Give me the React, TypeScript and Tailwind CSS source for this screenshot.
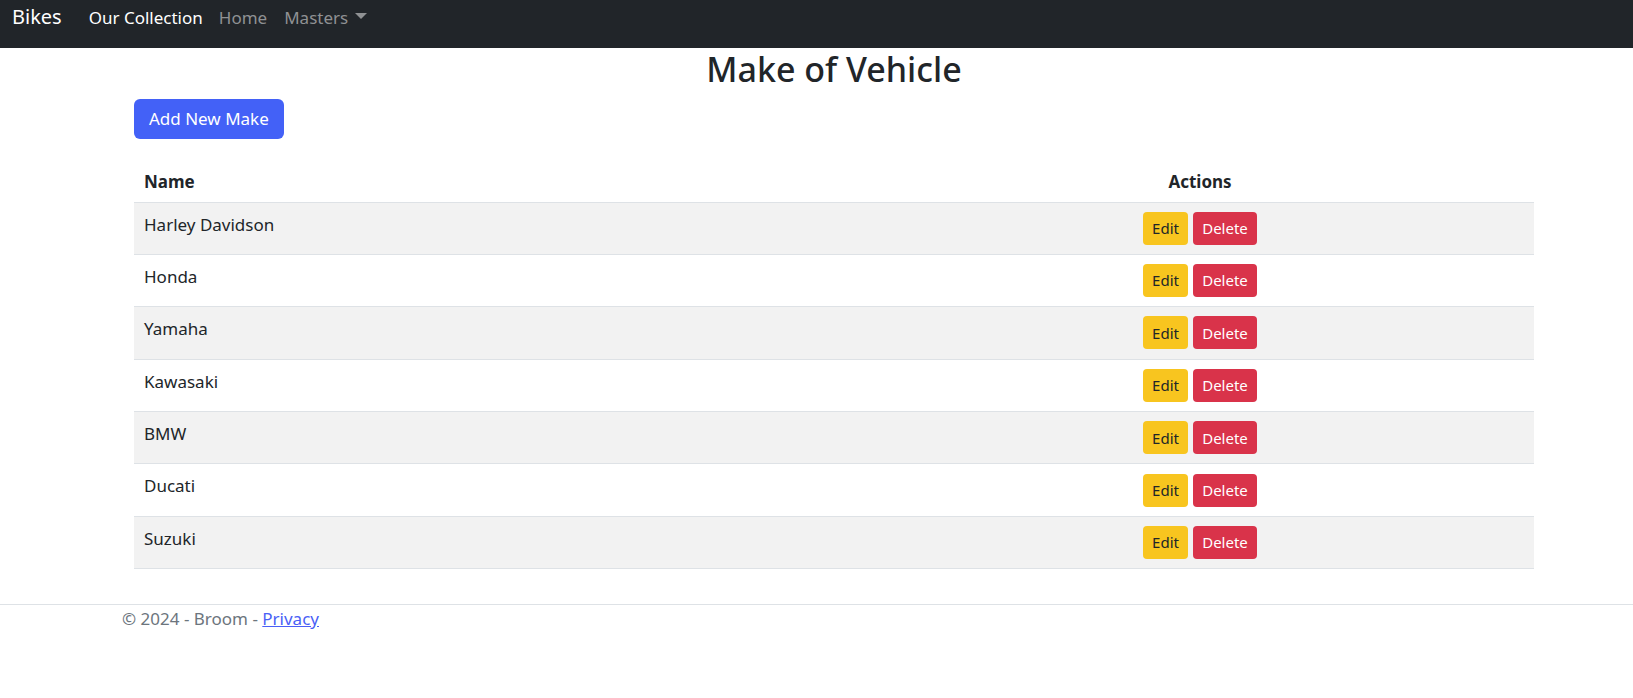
const makes = ["Harley Davidson", "Honda", "Yamaha", "Kawasaki", "BMW", "Ducati", "Suzuki"];

export default function App() {
  return (
    <div className="min-h-screen bg-white text-[#212529] font-['Noto_Sans',sans-serif]">
      <nav className="h-[48px] bg-[#212529] flex items-baseline pt-[2px] pl-[12px]">
        <span className="text-[20px] leading-[30px] text-white mr-[27px]">Bikes</span>
        <a className="text-[17px] leading-[24px] text-white mr-[16px]">Our Collection</a>
        <a className="text-[17px] leading-[24px] text-[#8f9193] mr-[17px]">Home</a>
        <a className="text-[17px] leading-[24px] text-[#8f9193] flex items-center">
          Masters
          <span className="ml-[7px] mb-[4px] w-0 h-0 border-l-[6px] border-r-[6px] border-t-[6px] border-l-transparent border-r-transparent border-t-[#8f9193]" />
        </a>
      </nav>

      <main className="ml-[134px] w-[1400px]">
        <h1 className="text-center text-[34px] leading-[43px] font-medium mt-[0px]">Make of Vehicle</h1>
        <button className="mt-[8px] h-[40px] px-[15px] rounded-[6px] bg-[#4361f7] text-white text-[17px]">
          Add New Make
        </button>

        <table className="w-full mt-[17px] text-[17px] border-collapse">
          <thead>
            <tr className="border-b border-[#dee2e6] h-[46px]">
              <th className="w-[732px] text-left font-bold px-[10px] pt-[6px] align-middle">Name</th>
              <th className="text-center font-bold pt-[6px] align-middle">Actions</th>
            </tr>
          </thead>
          <tbody>
            {makes.map((m, i) => (
              <tr key={m} className={`h-[52.4px] border-b border-[#dee2e6] ${i % 2 === 0 ? "bg-[#f2f2f2]" : "bg-white"}`}>
                <td className="px-[10px] align-top pt-[9px]">{m}</td>
                <td className="text-center">
                  <div className="flex justify-center gap-[5px]">
                    <button className="h-[33px] w-[45px] rounded-[4px] bg-[#f8c51f] text-[#212529] text-[15px]">Edit</button>
                    <button className="h-[33px] w-[64px] rounded-[4px] bg-[#d9334a] text-white text-[15px]">Delete</button>
                  </div>
                </td>
              </tr>
            ))}
          </tbody>
        </table>
      </main>

      <footer className="mt-[35px] border-t border-[#dee2e6] pl-[122px] text-[17px] text-[#6c757d] leading-[28px]">
        © 2024 - Broom - <a className="text-[#4a5ff6] underline">Privacy</a>
      </footer>
    </div>
  );
}
